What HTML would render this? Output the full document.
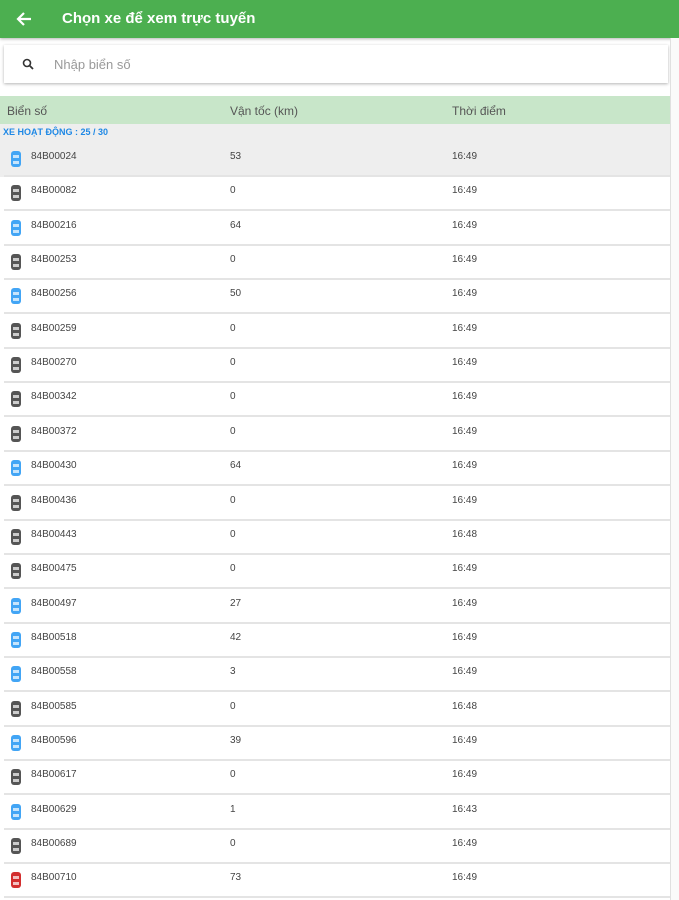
<!DOCTYPE html><html><head><meta charset="utf-8"><style>
body{margin:0;width:679px;height:900px;overflow:hidden;background:#fff;font-family:"Liberation Sans",sans-serif;position:relative}
.bar{position:absolute;left:0;top:0;width:679px;height:38px;background:#4caf50;box-shadow:0 1px 3px rgba(0,0,0,.3)}
.bar .t{position:absolute;left:62px;top:10px;color:#fff;font-size:15px;font-weight:bold}
.search{position:absolute;left:4px;top:45px;width:664px;height:38px;background:#fff;box-shadow:0 1px 3px rgba(0,0,0,.3)}
.search .p{position:absolute;left:50px;top:12px;color:#999;font-size:13px}
.hdr{position:absolute;left:0;top:96px;width:670px;height:28px;background:#c8e6c9;font-size:12px;color:#555}
.hdr span{position:absolute;top:8px}
.grp{position:absolute;left:0;top:124px;width:670px;height:19px;background:#eee;color:#1e88e5;font-size:9px;font-weight:bold}
.sb{position:absolute;left:670px;top:38px;width:9px;height:862px;background:#fafafa;border-left:1px solid #e0e0e0}
.row{position:absolute;left:0;width:670px;height:34px;font-size:10px;color:#444}
.row::after{content:"";position:absolute;left:4px;right:0;bottom:0;height:2px;background:#e4e4e4}
.row span{position:absolute;top:8px}
.ic{position:absolute;left:11px;top:8px;width:10px;height:16px;border-radius:3px}
.ic::before{content:"";position:absolute;left:2px;top:4px;width:6px;height:3px;background:rgba(255,255,255,.7)}
.ic::after{content:"";position:absolute;left:2px;top:10px;width:6px;height:3px;background:rgba(255,255,255,.7)}
.b{background:#42a5f5}.g{background:#555}.r{background:#d32f2f}
</style></head><body>
<div class="bar"><svg style="position:absolute;left:16px;top:11px" width="16" height="16" viewBox="0 0 16 16"><path d="M15 8H3M8 2L2 8l6 6" stroke="#fff" stroke-width="2.2" fill="none"/></svg><div class="t">Chọn xe để xem trực tuyến</div></div>
<div class="search"><svg style="position:absolute;left:18px;top:13px" width="12" height="12" viewBox="0 0 12 12"><circle cx="5" cy="5" r="3.5" stroke="#333" stroke-width="1.6" fill="none"/><path d="M7.5 7.5L11 11" stroke="#333" stroke-width="1.8"/></svg><div class="p">Nhập biển số</div></div>
<div class="hdr"><span style="left:7px">Biển số</span><span style="left:230px">Vận tốc (km)</span><span style="left:452px">Thời điểm</span></div>
<div class="grp"><span style="position:absolute;left:3px;top:3px">XE HOẠT ĐỘNG : 25 / 30</span></div>
<div class="sb"></div>
<div id="rows"></div>
<script>
var d=[["84B00024",53,"16:49","b"],["84B00082",0,"16:49","g"],["84B00216",64,"16:49","b"],["84B00253",0,"16:49","g"],["84B00256",50,"16:49","b"],["84B00259",0,"16:49","g"],["84B00270",0,"16:49","g"],["84B00342",0,"16:49","g"],["84B00372",0,"16:49","g"],["84B00430",64,"16:49","b"],["84B00436",0,"16:49","g"],["84B00443",0,"16:48","g"],["84B00475",0,"16:49","g"],["84B00497",27,"16:49","b"],["84B00518",42,"16:49","b"],["84B00558",3,"16:49","b"],["84B00585",0,"16:48","g"],["84B00596",39,"16:49","b"],["84B00617",0,"16:49","g"],["84B00629",1,"16:43","b"],["84B00689",0,"16:49","g"],["84B00710",73,"16:49","r"]];
var h="";d.forEach(function(r,i){var y=143+i*34.35;h+='<div class="row" style="top:'+y+'px;'+(i==0?'background:#eee':'')+'"><div class="ic '+r[3]+'"></div><span style="left:31px">'+r[0]+'</span><span style="left:230px">'+r[1]+'</span><span style="left:452px">'+r[2]+'</span></div>';});
document.getElementById("rows").innerHTML=h;
</script>
</body></html>
